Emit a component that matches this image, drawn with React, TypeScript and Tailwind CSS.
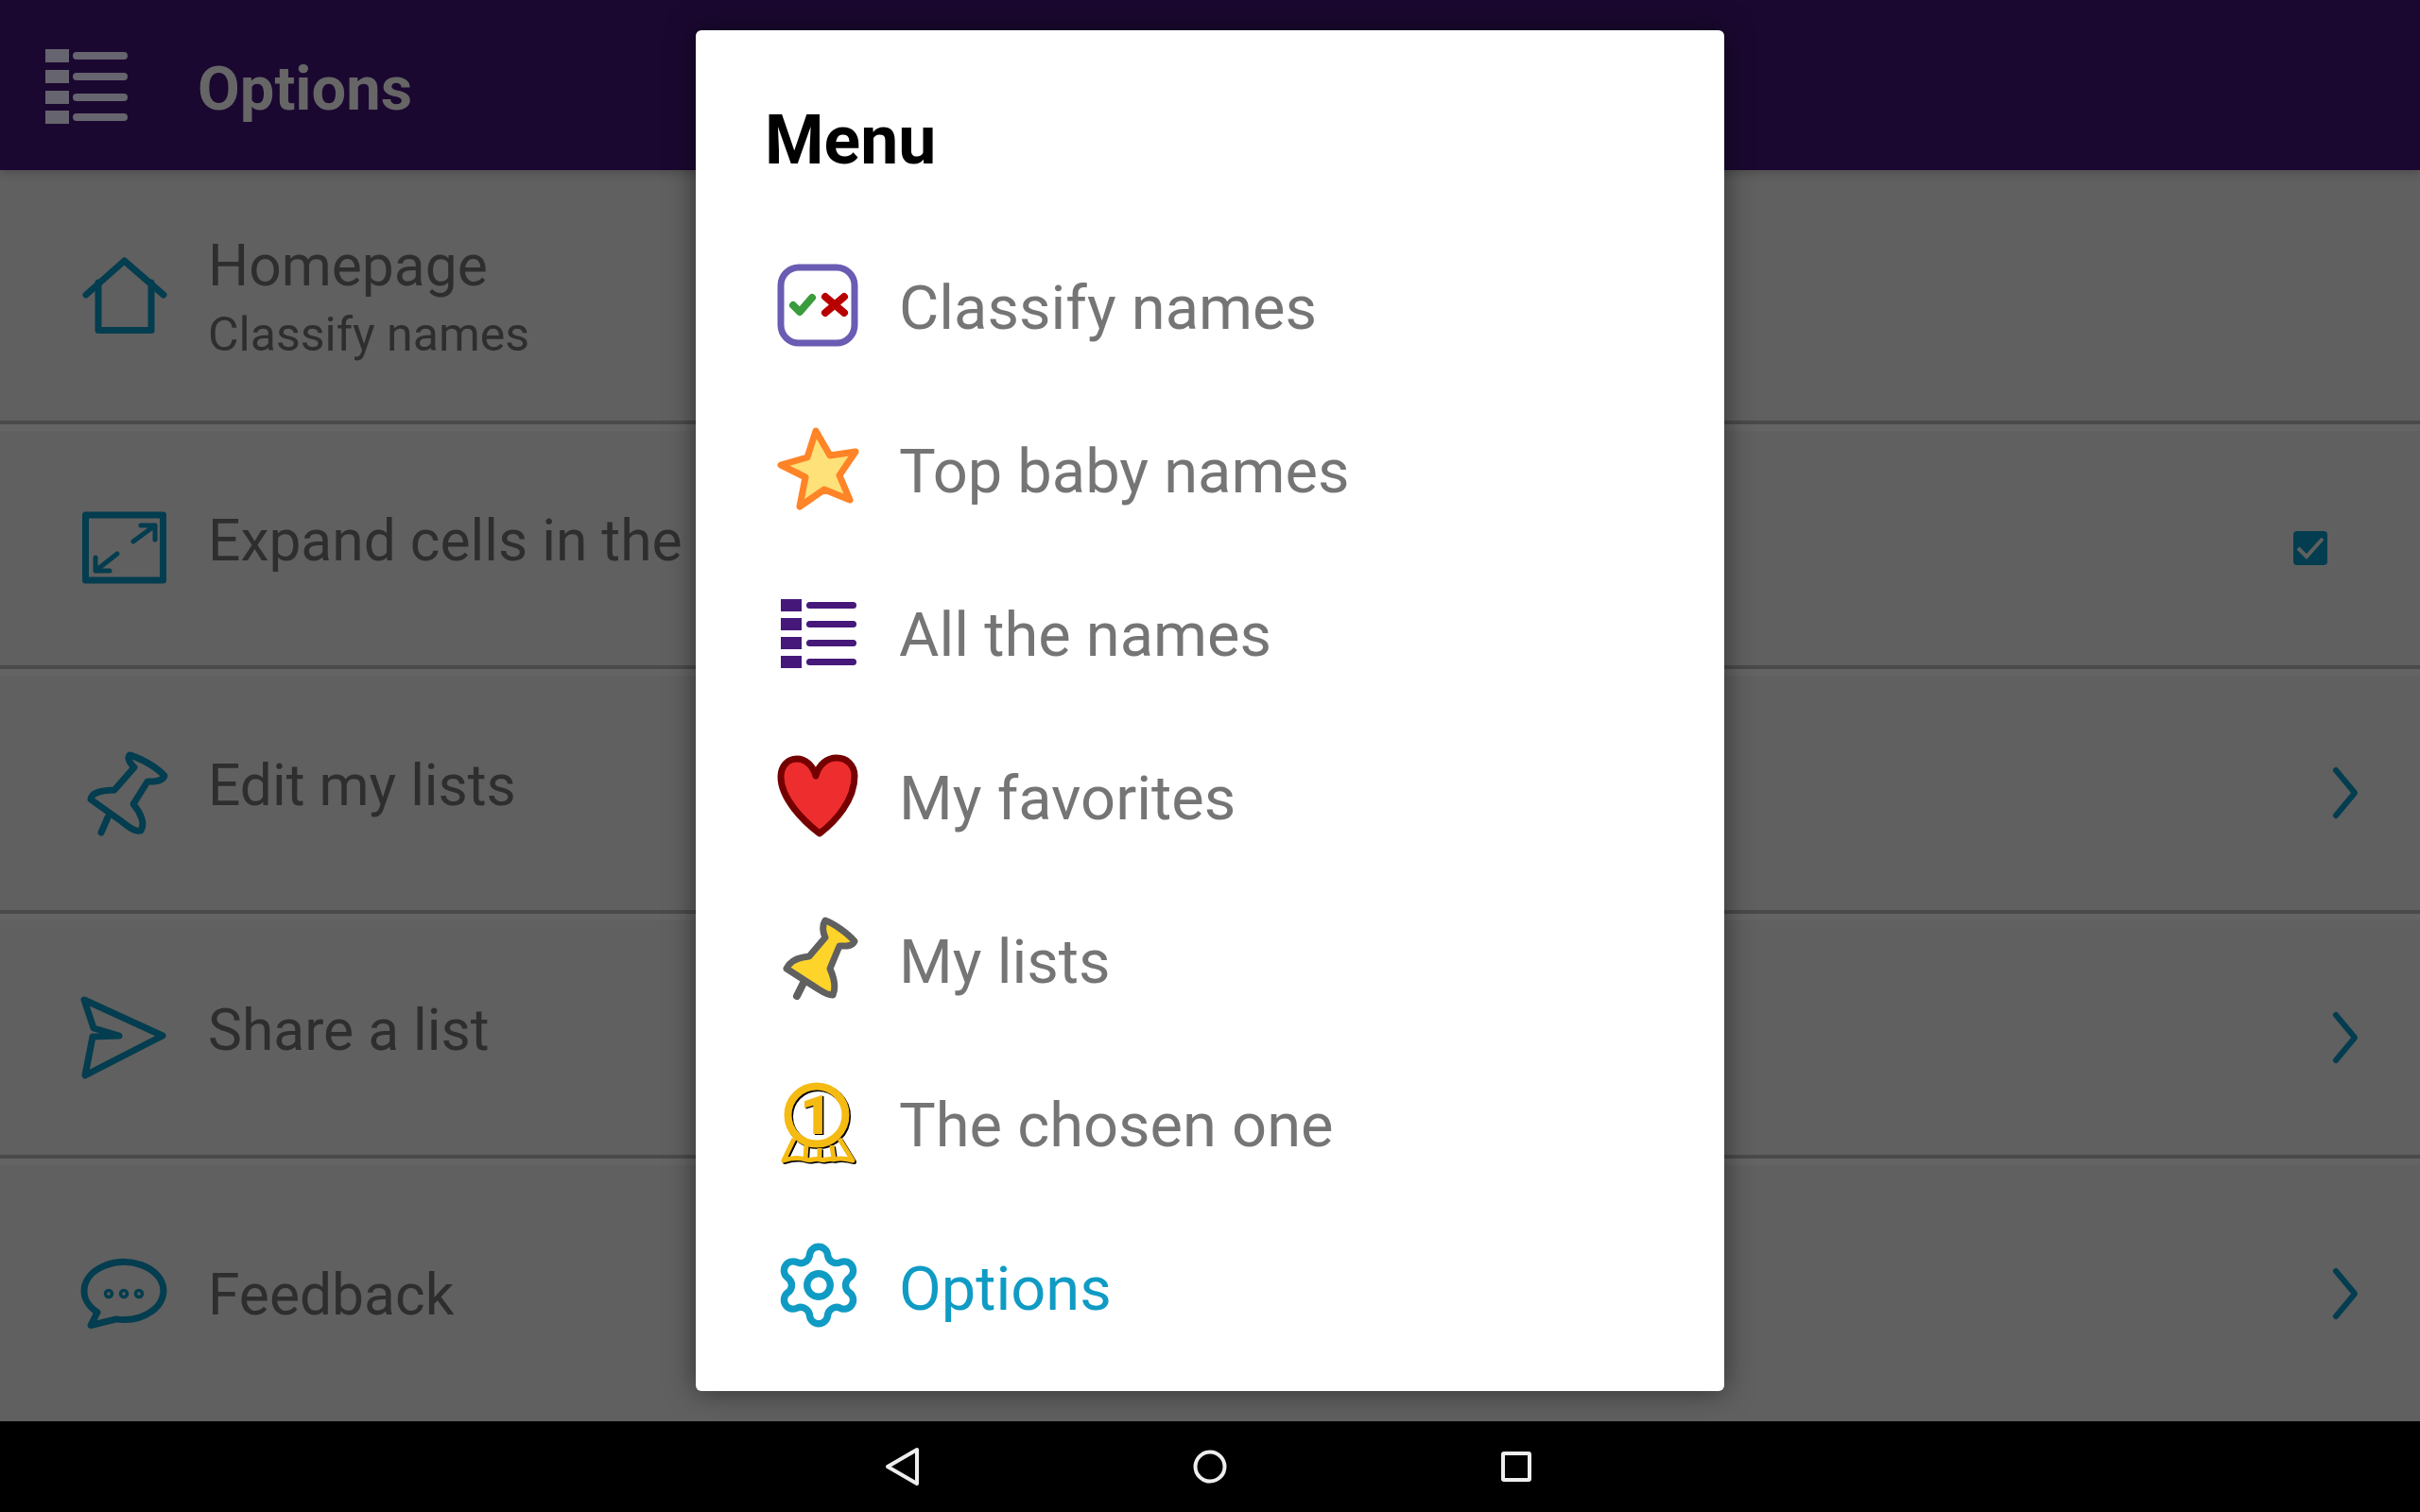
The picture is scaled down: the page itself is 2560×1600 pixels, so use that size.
import React from 'react';
import { Settings } from 'lucide-react';

const teal = '#033d4f';

const HomeIcon = () => (
    <svg width="104" height="104" viewBox="0 0 104 104" fill="none" stroke={teal} strokeWidth="7" strokeLinecap="round" strokeLinejoin="round">
        <path d="M11 51 L51.5 15 L93 51" />
        <path d="M24 38 V88.5 H80 V38" />
    </svg>
);

const ExpandIcon = () => (
    <svg width="104" height="104" viewBox="0 0 104 104" fill="none" stroke={teal} strokeWidth="5" strokeLinecap="round" strokeLinejoin="round">
        <rect x="10.5" y="17" width="82" height="69" strokeWidth="7" />
        <path d="M61 45 L84 28 M69 28 H84 V43" />
        <path d="M44 58 L21 76 M21 62 V76 H36" />
    </svg>
);

const PinIcon = () => (
    <svg width="104" height="104" viewBox="0 0 104 104" fill="none" stroke={teal} strokeWidth="7" strokeLinecap="round" strokeLinejoin="round">
        <path d="M57 12 C68 15 85 24 94 34 C92 40 84 40 76 40 L61 64 C68 72 74 84 69 92 C62 94 54 86 47 81 L16 59 C16 52 28 49 41 49 L62 25 C58 21 54 16 57 12 Z" />
        <path d="M34 78 L27 94" />
    </svg>
);

const SendIcon = () => (
    <svg width="104" height="104" viewBox="0 0 104 104" fill="none" stroke={teal} strokeWidth="7" strokeLinecap="round" strokeLinejoin="round">
        <path d="M9 12 L92 50 L10 92 L18 51 L46 50 L19 42 Z" />
    </svg>
);

const ChatIcon = () => (
    <svg width="104" height="104" viewBox="0 0 104 104" fill="none" stroke={teal} strokeWidth="7" strokeLinecap="round" strokeLinejoin="round">
        <path d="M23 71.7 A42 30.5 0 1 1 43 78.9 L16 85.5 Z" />
        <circle cx="35" cy="52" r="3.5" strokeWidth="3.5" />
        <circle cx="51" cy="52" r="3.5" strokeWidth="3.5" />
        <circle cx="67" cy="52" r="3.5" strokeWidth="3.5" />
    </svg>
);

const Chevron = () => (
    <svg width="32" height="60" viewBox="0 0 32 60" fill="none" stroke={teal} strokeWidth="6" strokeLinecap="round" strokeLinejoin="round">
        <path d="M6 6 L26 30 L6 54" />
    </svg>
);

const CheckedBox = () => (
    <div className="mr-[35px] w-9 h-9 rounded-[4px] bg-[#033d4f] flex items-center justify-center">
        <svg width="36" height="36" viewBox="0 0 36 36" fill="none" stroke="#606060" strokeWidth="4">
            <path d="M5 18 L14 27 L31 8" />
        </svg>
    </div>
);

const ClassifyIcon = () => (
    <svg width="120" height="120" viewBox="0 0 120 120" fill="none" strokeLinecap="round" strokeLinejoin="round">
        <rect x="26" y="23" width="78" height="80" rx="19" stroke="#6a5cb3" strokeWidth="7" />
        <path d="M39 63 L46 70 L59 55" stroke="#3a9c3c" strokeWidth="8" />
        <path d="M73 54 L93 71 M93 54 L73 71" stroke="#b80000" strokeWidth="8" />
    </svg>
);

const StarIcon = () => (
    <svg width="120" height="120" viewBox="0 0 120 120" fill="#ffe17a" stroke="#ff8427" strokeWidth="7" strokeLinejoin="round">
        <path d="M63 23 L78 49 L105 45 L88 70 L99 96 L72 85 L46 103 L52 72 L26 59 L54 51 Z" />
    </svg>
);

const ListIcon = ({ color }: { color: string }) => (
    <svg width="120" height="120" viewBox="0 0 120 120" fill={color}>
        <rect x="26" y="28" width="22" height="13" />
        <rect x="26" y="48" width="22" height="13" />
        <rect x="26" y="68" width="22" height="13" />
        <rect x="26" y="88" width="22" height="13" />
        <rect x="53" y="31" width="53" height="7" rx="3.5" />
        <rect x="53" y="51" width="53" height="7" rx="3.5" />
        <rect x="53" y="71" width="53" height="7" rx="3.5" />
        <rect x="53" y="91" width="53" height="7" rx="3.5" />
    </svg>
);

const HeaderListIcon = () => (
    <svg width="88" height="80" viewBox="0 0 88 80" fill="#66646e">
        <rect x="0" y="0" width="25" height="14" />
        <rect x="0" y="22" width="25" height="14" />
        <rect x="0" y="44" width="25" height="14" />
        <rect x="0" y="65" width="25" height="14" />
        <rect x="29" y="3" width="58" height="8" rx="4" />
        <rect x="29" y="25" width="58" height="8" rx="4" />
        <rect x="29" y="47" width="58" height="8" rx="4" />
        <rect x="29" y="68" width="58" height="8" rx="4" />
    </svg>
);

const HeartIcon = () => (
    <svg width="120" height="120" viewBox="0 0 120 120" fill="#ee2e2e" stroke="#750000" strokeWidth="7" strokeLinecap="round" strokeLinejoin="round">
        <path d="M63 42 C60 31 52 24 43 24 C33 24 26 32 26 43 C26 66 50 90 67 103 C84 90 104 68 104 42 C104 31 96 23 85 23 C75 23 66 30 63 42 Z" />
    </svg>
);

const ThumbPinIcon = () => (
    <svg width="120" height="120" viewBox="0 0 120 120" fill="#ffd42a" stroke="#606060" strokeWidth="7" strokeLinecap="round" strokeLinejoin="round">
        <path d="M50 88 L43 102" fill="none" strokeWidth="8" />
        <path d="M73 22 C82 25 97 36 104 44 C102 50 94 49 88 49 L78 73 C82 82 85 92 81 101 C74 101 68 96 63 93 L32 73 C36 64 45 61 56 60 L73 40 C71 36 69 28 73 22 Z" />
    </svg>
);

const Ribbon = ({ color, dx }: { color: string; dx: number }) => (
    <g fill="none" stroke={color} strokeWidth="5" strokeLinejoin="round" transform={`translate(${dx} ${dx})`}>
        <circle cx="64" cy="55" r="30.5" strokeWidth="8" />
        <path d="M40 80 L29 103 C38 100 46 100 52 102 C58 104 62 100 67 102 C72 104 76 100 82 102 C88 100 95 101 102 103 L88 80" />
        <path d="M53 87 L52 101 M67 90 V102 M80 87 L82 101" />
    </g>
);

const MedalIcon = () => (
    <svg width="120" height="120" viewBox="0 0 120 120">
        <Ribbon color="#000000" dx={1.5} />
        <Ribbon color="#f5bb12" dx={0} />
        <text x="64.5" y="76" textAnchor="middle" fontFamily="Roboto, sans-serif" fontWeight="900" fontSize="58" fill="#000000">1</text>
        <text x="63" y="75" textAnchor="middle" fontFamily="Roboto, sans-serif" fontWeight="900" fontSize="58" fill="#f5bb12">1</text>
    </svg>
);

const rows = [
    { icon: <ExpandIcon />, label: 'Expand cells in the', right: <CheckedBox /> },
    { icon: <PinIcon />, label: 'Edit my lists', right: <Chevron /> },
    { icon: <SendIcon />, label: 'Share a list', right: <Chevron /> },
];

const menu = [
    { icon: <ClassifyIcon />, label: 'Classify names' },
    { icon: <StarIcon />, label: 'Top baby names' },
    { icon: <ListIcon color="#45187a" />, label: 'All the names' },
    { icon: <HeartIcon />, label: 'My favorites' },
    { icon: <ThumbPinIcon />, label: 'My lists' },
    { icon: <MedalIcon />, label: 'The chosen one' },
];

const HomeSlot = ({ children }: { children: React.ReactNode }) => <div className="shrink-0 w-[104px] h-[104px]">{children}</div>;

const GearSlot = () => (
    <div className="w-[120px] h-[120px] flex items-center justify-center pl-[12px] pt-[5px]">
        <Settings size={98} strokeWidth={1.8} color="#0f9bc4" />
    </div>
);

const MenuRow = ({ icon, label, color }: { icon: React.ReactNode; label: string; color: string }) => (
    <div className="h-[173px] flex items-center">
        <div className="shrink-0 w-[120px] h-[120px]">{icon}</div>
        <span className={`ml-[31px] pt-[15px] text-[65px] ${color}`}>{label}</span>
    </div>
);

export default function App() {
    return (
        <div className="relative w-[2560px] h-[1600px] overflow-hidden bg-[#606060] flex flex-col font-['Roboto',sans-serif]">
            {/* App bar */}
            <header className="relative z-10 h-[180px] shrink-0 bg-[#1b0831] flex items-center pl-[48px] pt-[4px] shadow-[0_3px_10px_rgba(0,0,0,0.2)]">
                <HeaderListIcon />
                <span className="ml-[73px] pt-[5px] text-[65px] font-bold text-[#666666] leading-none">Options</span>
            </header>

            {/* Settings list */}
            <main className="flex-1 flex flex-col text-[#2e2e2e]">
                <div className="h-[269px] flex items-center pl-[80px] border-b-4 border-[#4a4a4a]">
                    <HomeIcon />
                    <div className="ml-[36px] pt-[14px] flex flex-col">
                        <span className="text-[60.5px] leading-[68px]">Homepage</span>
                        <span className="text-[50px] leading-[76px]">Classify names</span>
                    </div>
                </div>
                {rows.map((row) => (
                    <div key={row.label} className="h-[259px] flex items-center pl-[80px] pr-[63px] border-t-[7px] border-t-[#646464] border-b-4 border-b-[#4a4a4a]">
                        <HomeSlot>{row.icon}</HomeSlot>
                        <span className="ml-[36px] mb-[14px] text-[60.5px]">{row.label}</span>
                        <div className="ml-auto">{row.right}</div>
                    </div>
                ))}
                <div className="flex-1 flex items-center pl-[80px] pr-[63px] border-t-[7px] border-t-[#646464]">
                    <HomeSlot><ChatIcon /></HomeSlot>
                    <span className="ml-[36px] mt-[6px] text-[60.5px]">Feedback</span>
                    <div className="ml-auto"><Chevron /></div>
                </div>
            </main>

            {/* Android nav bar */}
            <nav className="h-[96px] shrink-0 bg-black flex items-center justify-center gap-[276px]">
                <svg width="48" height="48" viewBox="0 0 48 48" fill="none" stroke="#eeeeee" strokeWidth="4" strokeLinejoin="round">
                    <path d="M7 24 L38 6 V42 Z" />
                </svg>
                <svg width="48" height="48" viewBox="0 0 48 48" fill="none" stroke="#eeeeee" strokeWidth="4">
                    <circle cx="24" cy="24" r="15.5" />
                </svg>
                <svg width="48" height="48" viewBox="0 0 48 48" fill="none" stroke="#eeeeee" strokeWidth="4" strokeLinejoin="round">
                    <rect x="10" y="10" width="28" height="28" rx="1" />
                </svg>
            </nav>

            {/* Menu dialog */}
            <div className="absolute z-20 left-[736px] top-[32px] w-[1088px] h-[1440px] bg-white rounded-[6px] shadow-[0_0_30px_rgba(0,0,0,0.5)] pl-[64px]">
                <h2 className="h-[201px] pt-[83px] pl-[9px] text-[71.5px] leading-[68px] font-bold text-black">Menu</h2>
                {menu.map((item) => (
                    <MenuRow key={item.label} icon={item.icon} label={item.label} color="text-[#757575]" />
                ))}
                <MenuRow icon={<GearSlot />} label="Options" color="text-[#0f9bc4]" />
            </div>
        </div>
    );
}
